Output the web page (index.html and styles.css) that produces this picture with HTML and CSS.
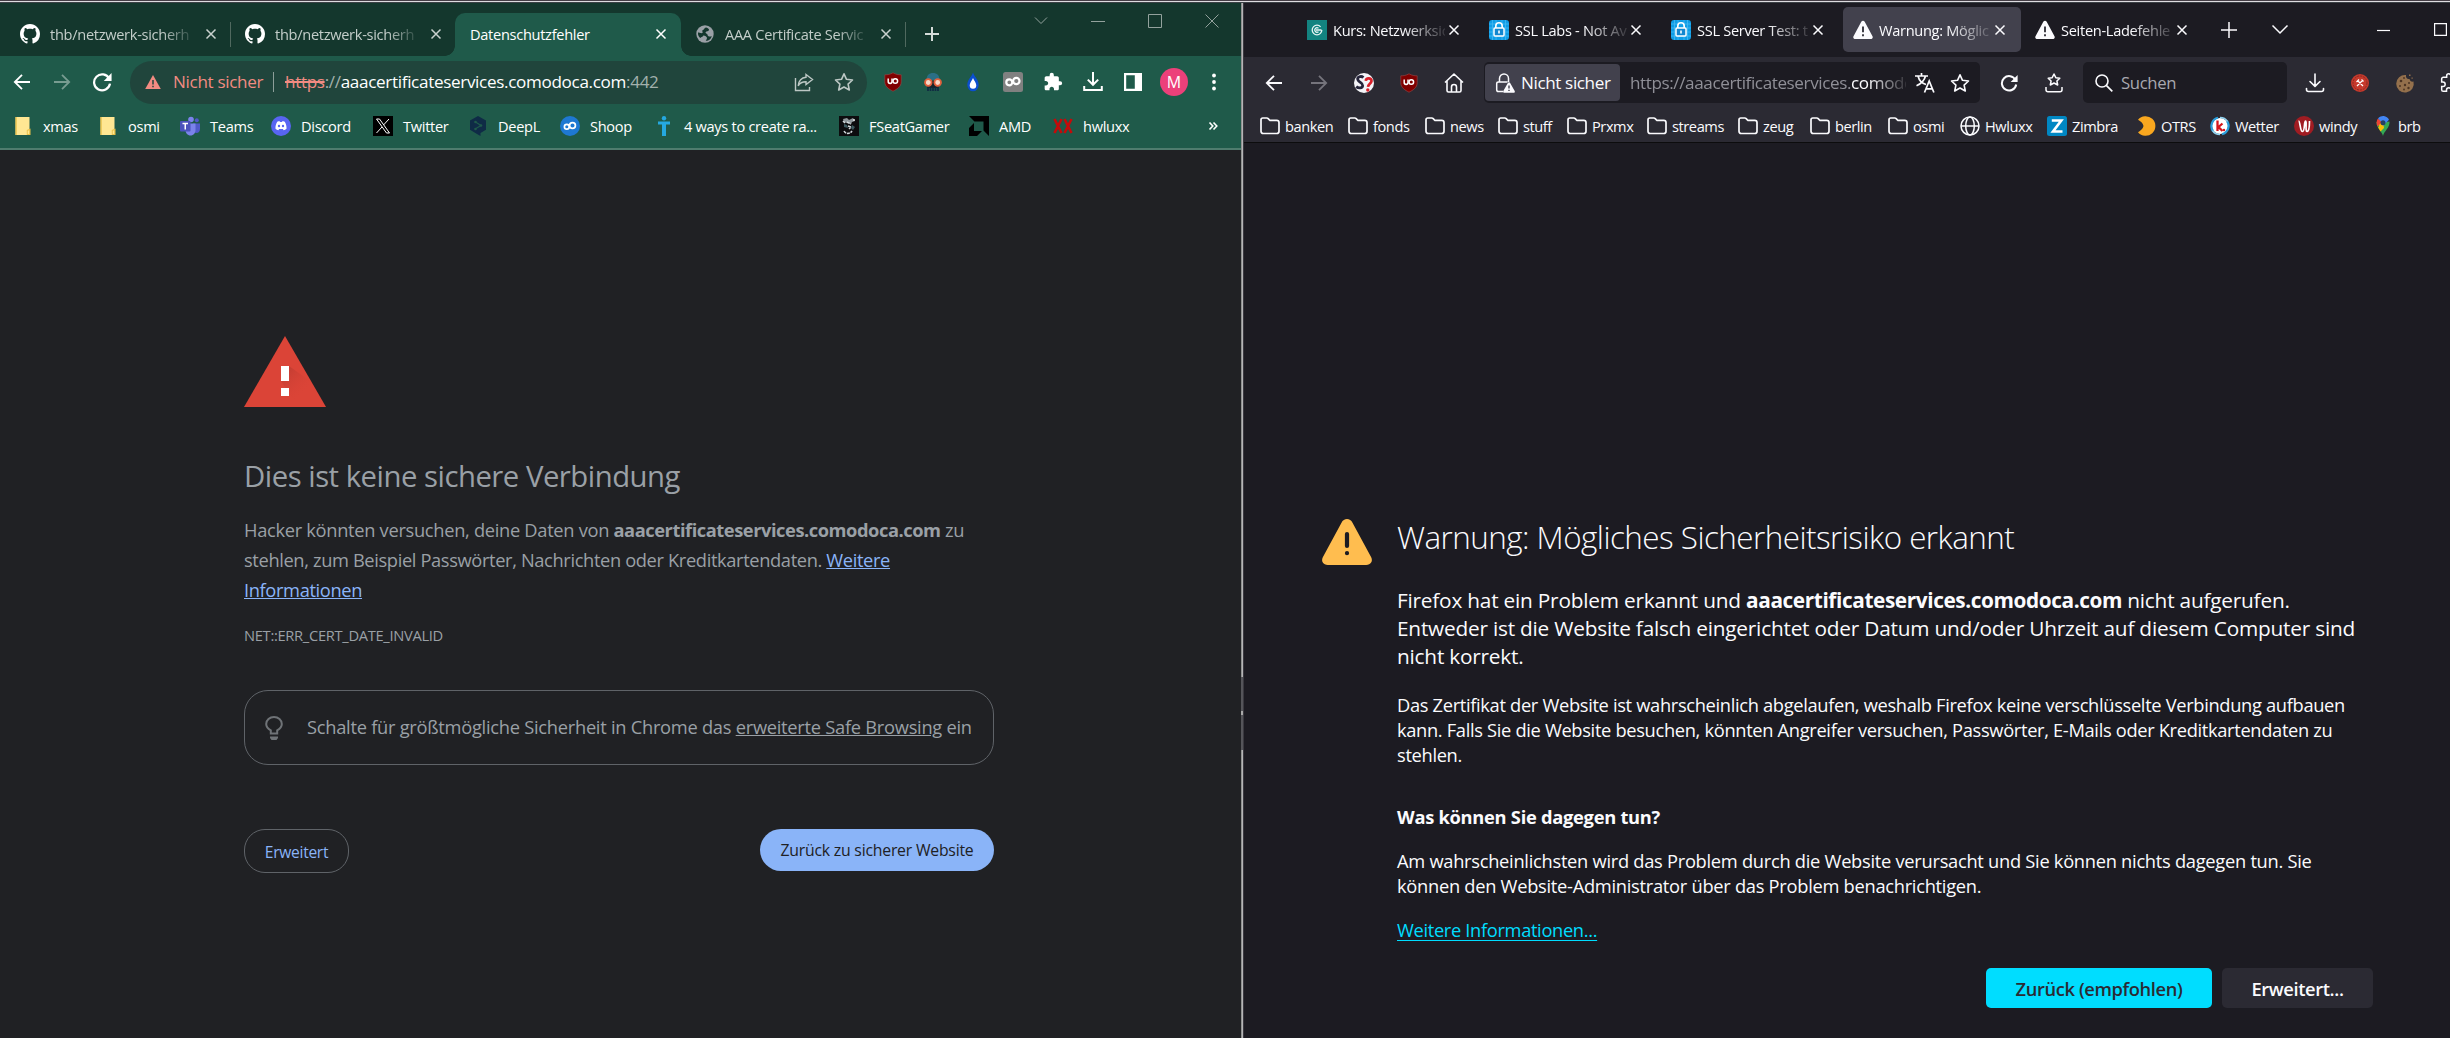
FILE: index.html
```
<!DOCTYPE html>
<html lang="de">
<head>
<meta charset="utf-8">
<title>Datenschutzfehler</title>
<link rel="stylesheet" href="styles.css">
</head>
<body>
<svg class="defs" aria-hidden="true">
  <symbol id="github" viewBox="0 0 16 16"><path fill="#fff" d="M8 0C3.58 0 0 3.58 0 8c0 3.54 2.29 6.53 5.47 7.59.4.07.55-.17.55-.38 0-.19-.01-.82-.01-1.49-2.01.37-2.53-.49-2.69-.94-.09-.23-.48-.94-.82-1.13-.28-.15-.68-.52-.01-.53.63-.01 1.08.58 1.23.82.72 1.21 1.87.87 2.33.66.07-.52.28-.87.51-1.07-1.78-.2-3.64-.89-3.64-3.95 0-.87.31-1.59.82-2.15-.08-.2-.36-1.02.08-2.12 0 0 .67-.21 2.2.82.64-.18 1.32-.27 2-.27s1.36.09 2 .27c1.53-1.04 2.2-.82 2.2-.82.44 1.1.16 1.92.08 2.12.51.56.82 1.27.82 2.15 0 3.07-1.87 3.75-3.65 3.95.29.25.54.73.54 1.48 0 1.07-.01 1.93-.01 2.2 0 .21.15.46.55.38A8.01 8.01 0 0 0 16 8c0-4.42-3.58-8-8-8z"/></symbol>
  <symbol id="cross" viewBox="0 0 12 12"><path fill="none" stroke="currentColor" stroke-width="1.5" d="M1.5 1.5l9 9M10.5 1.5l-9 9"/></symbol>
  <symbol id="arrow-l" viewBox="0 0 18 18"><path fill="none" stroke="currentColor" stroke-width="1.8" d="M17 9H2M9 1.8L1.8 9 9 16.2"/></symbol>
  <symbol id="arrow-r" viewBox="0 0 18 18"><path fill="none" stroke="currentColor" stroke-width="1.8" d="M1 9h15M9 1.8L16.2 9 9 16.2"/></symbol>
  <symbol id="reload" viewBox="0 0 18 18"><path fill="none" stroke="currentColor" stroke-width="2" d="M15.5 6A7.2 7.2 0 1 0 16.2 10.5"/><path fill="currentColor" d="M17.6 1v7h-7z"/></symbol>
  <symbol id="star" viewBox="0 0 20 20"><path fill="none" stroke="currentColor" stroke-width="1.6" stroke-linejoin="round" d="M10 1.8l2.5 5.5 6 .7-4.4 4.1 1.2 5.9-5.3-3-5.3 3 1.2-5.9L1.500 8l6-.7z"/></symbol>
  <symbol id="download" viewBox="0 0 20 20"><path fill="none" stroke="currentColor" stroke-width="2" d="M10 0v12M4.800 7.600L10 12.800l5.200-5.200M1.200 14v4h17.600v-4"/></symbol>
  <symbol id="ublock" viewBox="0 0 20 20"><path fill="#800000" stroke="#9a4a4a" stroke-width=".6" d="M10 .8c3 1.700 5.500 2 8.200 2v7c0 5-4.500 7.500-8.200 9.400C6.300 17.300 1.800 14.800 1.800 9.800v-7c2.700 0 5.200-.3 8.200-2z"/><path fill="none" stroke="#fff" stroke-width="1.500" d="M5.200 6.500v3a1.800 1.800 0 0 0 3.800 0v-3m0 2.700"/><circle cx="12.300" cy="9" r="2.300" fill="none" stroke="#fff" stroke-width="1.500"/></symbol>
  <symbol id="puzzle" viewBox="0 0 24 24"><path d="M20.500 11H19V7c0-1.100-.9-2-2-2h-4V3.500a2.500 2.500 0 0 0-5 0V5H4c-1.100 0-2 .9-2 2v3.800h1.500c1.500 0 2.700 1.200 2.700 2.700S5 16.200 3.500 16.200H2V20c0 1.100.9 2 2 2h3.800v-1.500c0-1.500 1.200-2.700 2.700-2.700s2.700 1.200 2.700 2.700V22H17c1.100 0 2-.9 2-2v-4h1.500a2.500 2.500 0 0 0 0-5z"/></symbol>
  <symbol id="folder" viewBox="0 0 20 20"><path fill="none" stroke="currentColor" stroke-width="1.700" stroke-linejoin="round" d="M1 3.800C1 2.600 1.700 2 2.800 2h4c.6 0 1 .2 1.400.600l1.500 1.700h7c1.500 0 2.300.8 2.300 2.200v8.700c0 1.500-.8 2.300-2.300 2.300H3.300C1.800 17.500 1 16.700 1 15.200z"/></symbol>
  <symbol id="win-folder" viewBox="0 0 20 20"><path fill="#ffe793" d="M2.500 1h14v18h-14z"/><path fill="#e9c048" d="M2.500 1h1.200v18H2.500zM13.800 14l3.700-1.500V19h-3.700z"/><path fill="#ffe793" d="M14.700 14.500h1.500V18h-1.500z"/></symbol>
  <symbol id="warn" viewBox="0 0 20 20"><path fill="#fbfbfe" d="M8.300 1.800c.7-1.500 2.700-1.500 3.400 0l7.800 14.400c.7 1.500-.2 2.900-1.800 2.900H2.300C.7 19.100-.2 17.700.500 16.200z"/><path stroke="#2b2a33" stroke-width="1.800" d="M10 6.500v5.800M10 14.200v2"/></symbol>
  <symbol id="ssl" viewBox="0 0 20 20"><rect width="20" height="20" rx="3" fill="#0e9de6"/><path stroke="#4bbcf2" stroke-width=".7" d="M3.500 0v20M7 0v20M13 0v20M16.500 0v20M0 4h20M0 8h20M0 12h20M0 16h20"/><rect x="5" y="8" width="10" height="8" rx="1" fill="#1287cf" stroke="#fff" stroke-width="1.500"/><path fill="none" stroke="#fff" stroke-width="1.600" d="M6.800 8V6a3.200 3.200 0 0 1 6.400 0v2M10 10.500v3"/></symbol>
</svg>

<div class="desktop-edge"></div>
<div class="desktop">
  <section class="chrome">
    <div class="c-strip">
      <div class="c-tab sep"><svg class="i20"><use href="#github"/></svg><span class="c-title fade">thb/netzwerk-sicherh</span><svg class="i12"><use href="#cross"/></svg></div>
      <div class="c-tab"><svg class="i20"><use href="#github"/></svg><span class="c-title fade">thb/netzwerk-sicherh</span><svg class="i12"><use href="#cross"/></svg></div>
      <div class="c-tab active"><span class="c-title">Datenschutzfehler</span><svg class="i12"><use href="#cross"/></svg></div>
      <div class="c-tab sep"><svg class="i20" viewBox="0 0 20 20"><circle cx="10" cy="10" r="8.700" fill="#9aa0a6"/><path fill="#14372d" d="M11 3.500c-2 .5-1.800 2.500-3.500 2.800-.8 1 .6 1.700 0 2.700-1.500.5-3.500-.5-4.500-.5-.3 3 1 4.800 2.500 5.500.5-1.500 2.200-.8 2.700-2.300 1.200-.4 2.500.5 3.500 1.500.9 1-.4 2.400-1 3.600 3 .2 5.500-2 6-4.800-1.700 1.200-4.200.5-4.200-1.500-.5-1.200-2-.8-2-2.300.9-1.200 3.300-.7 3.600-2.500-.4-1.200-1.800-2-3.100-2.200z"/></svg><span class="c-title fade">AAA Certificate Servic</span><svg class="i12"><use href="#cross"/></svg></div>
      <div class="c-plus"><svg class="i14" viewBox="0 0 14 14"><path stroke="#d5dcd9" stroke-width="2" d="M7 0v14M0 7h14"/></svg></div>
      <div class="c-controls">
        <svg viewBox="0 0 14 14"><path d="M1 3.500l6 6 6-6"/></svg>
        <svg viewBox="0 0 14 14"><path d="M0 7.500h14"/></svg>
        <svg viewBox="0 0 14 14"><path d="M.5.500h13v13H.5z"/></svg>
        <svg viewBox="0 0 14 14"><path d="M.5.500l13 13M13.500.500l-13 13"/></svg>
      </div>
    </div>
    <div class="c-toolbar">
      <div class="c-row">
        <span class="cell"><svg class="i18"><use href="#arrow-l"/></svg></span>
        <span class="cell dim"><svg class="i18"><use href="#arrow-r"/></svg></span>
        <span class="cell"><svg class="i20"><use href="#reload"/></svg></span>
        <div class="omnibox">
          <svg class="i16" viewBox="0 0 16 16"><path fill="#f28b82" d="M8 1l7.800 14H.2z"/><path stroke="#20453c" stroke-width="1.500" d="M8 6v4.500M8 11.700v1.500"/></svg>
          <span class="insecure">Nicht sicher</span>
          <span class="bar"></span>
          <span class="url"><s>https</s>://<b>aaacertificateservices.comodoca.com</b>:442</span>
          <span class="cell grey"><svg class="i20" viewBox="0 0 20 20"><path fill="none" stroke="currentColor" stroke-width="1.400" d="M1.500 6v12.500h14V15M12 2.500l6.500 5-6.500 5V9.800c-4 0-6.200 1.200-7.800 4C4.700 9.500 7 5.800 12 5.300z"/></svg></span>
          <span class="cell grey"><svg class="i20"><use href="#star"/></svg></span>
        </div>
        <span class="cell first"><svg class="i20"><use href="#ublock"/></svg></span>
        <span class="cell"><svg class="i20" viewBox="0 0 20 20"><path fill="#2a6f86" d="M3.500 8C3.500 3.500 6 1 10 1s6.500 2.500 6.500 7z"/><path fill="#15242b" d="M4 9h12v5l-1 2H5l-1-2z"/><circle cx="5.300" cy="10.500" r="3.300" fill="#f7d9c8" stroke="#e2603c" stroke-width="1.800"/><circle cx="14.700" cy="10.500" r="3.300" fill="#f7d9c8" stroke="#e2603c" stroke-width="1.800"/><path stroke="#102a43" stroke-width="1.700" d="M5 15v4M7.500 15.500V19M10 15.500V19M12.500 15.500V19M15 15v4"/></svg></span>
        <span class="cell"><svg class="i20" viewBox="0 0 20 20"><path fill="#0b4fd0" d="M10 .5c1.200 4 5.700 7.300 5.700 12.300a5.700 6.500 0 0 1-11.400 0C4.300 7.800 8.800 4.500 10 .5z"/><path fill="#fff" d="M10 6c.8 2.400 3.300 4.700 3.300 7.300a3.300 3.500 0 0 1-6.600 0C6.700 10.700 9.200 8.400 10 6z"/></svg></span>
        <span class="cell"><svg class="i20" viewBox="0 0 20 20"><rect width="20" height="20" rx="2.500" fill="#808080"/><circle cx="6.300" cy="10.300" r="3" fill="none" stroke="#fff" stroke-width="2.200"/><circle cx="13.300" cy="9" r="3.200" fill="none" stroke="#fff" stroke-width="2.200"/></svg></span>
        <span class="cell"><svg class="i20 solid"><use href="#puzzle"/></svg></span>
        <span class="cell"><svg class="i20"><use href="#download"/></svg></span>
        <span class="cell"><svg class="i18" viewBox="0 0 18 18"><path fill="#fff" fill-rule="evenodd" d="M0 0h18v18H0zM2.200 2.200v13.600h8.600V2.200z"/></svg></span>
        <span class="cell wide"><span class="avatar">M</span></span>
        <span class="cell menu"><svg class="i18" viewBox="0 0 18 18"><circle cx="9" cy="2.500" r="1.900" fill="#fff"/><circle cx="9" cy="9" r="1.900" fill="#fff"/><circle cx="9" cy="15.500" r="1.900" fill="#fff"/></svg></span>
      </div>
      <div class="c-marks">
        <span><svg class="i20"><use href="#win-folder"/></svg>xmas</span>
        <span><svg class="i20"><use href="#win-folder"/></svg>osmi</span>
        <span><svg class="i20" viewBox="0 0 20 20"><circle cx="11" cy="3.500" r="2.800" fill="#7b83eb"/><circle cx="16.800" cy="4.300" r="2" fill="#5059c9"/><path fill="#5059c9" d="M13 7.500h7v5.500c0 2.500-1.700 4-3.500 4S13 15 13 13z"/><path fill="#7b83eb" d="M5.500 7.500h10v6.500c0 3-2 5.500-5 5.500s-5-2.500-5-5.500z"/><rect y="5" width="10.500" height="10.500" rx="1" fill="#4b53bc"/><path stroke="#fff" stroke-width="1.500" d="M2.500 7.500H8M5.250 7.500v6"/></svg>Teams</span>
        <span><svg class="i20" viewBox="0 0 20 20"><circle cx="10" cy="10" r="10" fill="#5865f2"/><path fill="#fff" d="M6.200 5.800C7.200 5.300 8 5.200 8.500 5.100l.4.800h2.200l.4-.8c.5.1 1.300.2 2.300.7 1.300 2.200 1.900 4.500 1.700 7-.9.800-1.800 1.200-2.900 1.500l-.7-1.200H8.100l-.7 1.200c-1.100-.3-2-.7-2.900-1.500-.2-2.500.4-4.800 1.700-7z"/><circle cx="8" cy="10" r="1.200" fill="#5865f2"/><circle cx="12" cy="10" r="1.200" fill="#5865f2"/></svg>Discord</span>
        <span><svg class="i20" viewBox="0 0 20 20"><path d="M0 0h20v20H0z"/><path fill="none" stroke="#fff" stroke-width="1" d="M3.500 3h3l10 14h-3zM16 3l-5.500 6M9 11l-5.500 6"/></svg>Twitter</span>
        <span><svg class="i20 deepl" viewBox="0 0 20 20"><path fill="#0f2b46" d="M10 0l8 4.500v9.300L12.500 17v3L9 18 2 13.800V4.500z"/><path fill="none" stroke="#1f5a4a" stroke-width="1.200" d="M7.500 6l5.500 3.500-5.500 3.200"/><circle cx="7.500" cy="6" r="1.300" fill="#1f5a4a"/><circle cx="13" cy="9.500" r="1.300" fill="#1f5a4a"/><circle cx="7.500" cy="13" r="1.300" fill="#1f5a4a"/></svg>DeepL</span>
        <span><svg class="i20" viewBox="0 0 20 20"><circle cx="10" cy="10" r="10" fill="#1e78d2"/><circle cx="6.800" cy="10.700" r="2.400" fill="none" stroke="#fff" stroke-width="1.700"/><circle cx="12.500" cy="9.500" r="2.900" fill="none" stroke="#fff" stroke-width="1.700"/></svg>Shoop</span>
        <span><svg class="i20" viewBox="0 0 20 20"><path fill="#25a8e0" d="M4 5.500h12v3h-4V20H8V8.500H4z"/><circle cx="10" cy="2.300" r="2.200" fill="#25a8e0"/></svg>4 ways to create ra...</span>
        <span><svg class="i20" viewBox="0 0 20 20"><path fill="#0c0c0e" d="M0 0h20v20H0z"/><path fill="#8e979b" d="M4 3l4-1 2 2 4-2 2 3-3 1-1 2-4-1-3-1z"/><path fill="#3d5a60" d="M5 8l3 1 1 3-4-1zM13 9l3 2-2 3-2-2z"/><path fill="none" stroke="#d3d9dc" stroke-width="1.500" stroke-dasharray="3 .8" d="M5 15c2 3.500 6 3 8 0M8 6l4 2M9 10l3 1-2 2M4 5l2 2"/><circle cx="15" cy="4" r="1" fill="#e6eaec"/></svg>FSeatGamer</span>
        <span><svg class="i20" viewBox="0 0 20 20"><path d="M0 0h20v20l-5.500-5.500v-9h-9zM5 7v8h8l-5 5H0v-8z"/></svg>AMD</span>
        <span><svg class="i20" viewBox="0 0 20 20"><path fill="none" stroke="#c40a0a" stroke-width="2.600" d="M1.500 3l7 14M8.500 3l-7 14M11.500 3l7 14M18.500 3l-7 14"/></svg>hwluxx</span>
        <span class="more"><svg class="i10" viewBox="0 0 10 10"><path fill="none" stroke="#fff" stroke-width="1.600" d="M1.500 1.500L4.800 5 1.500 8.500M5.500 1.500L8.800 5 5.500 8.500"/></svg></span>
      </div>
    </div>
    <main class="c-page">
      <svg class="danger" viewBox="0 0 82 71"><defs><linearGradient id="sh" x1="0" y1="0" x2="1" y2="1"><stop offset="0" stop-color="#b93a30"/><stop offset=".6" stop-color="#db4437" stop-opacity="0"/></linearGradient></defs><path fill="#db4437" d="M41 0l41 71H0z"/><path fill="url(#sh)" d="M45 30l21 15 16 26H54L37 45h8z"/><path fill="#fff" d="M37 30h8v15h-8zM37 52h8v8h-8z"/></svg>
      <h1>Dies ist keine sichere Verbindung</h1>
      <p class="c-text"><span class="l1">Hacker könnten versuchen, deine Daten von <b>aaacertificateservices.comodoca.com</b> zu</span><br>stehlen, zum Beispiel Passwörter, Nachrichten oder Kreditkartendaten. <a>Weitere<br>Informationen</a></p>
      <p class="c-code">NET::ERR_CERT_DATE_INVALID</p>
      <div class="c-tip">
        <svg viewBox="0 0 18 24"><path fill="none" stroke="#6f7377" stroke-width="2" d="M5.800 17.500v-3.200C3 12.800 1.200 11 1.200 8a7.800 7 0 0 1 15.600 0c0 3-1.800 4.800-4.600 6.300v3.200z"/><path fill="#6f7377" d="M5 20.500h8v1.500l-1.500 2h-5L5 22z"/></svg>
        <span>Schalte für größtmögliche Sicherheit in Chrome das <u>erweiterte Safe Browsing</u> ein</span>
      </div>
      <div class="c-actions"><span class="c-more">Erweitert</span><span class="c-back">Zurück zu sicherer Website</span></div>
    </main>
  </section>

  <div class="divider"><span class="grip"></span></div>

  <section class="firefox">
    <div class="f-strip">
      <div class="f-tab"><svg class="i20" viewBox="0 0 20 20"><path fill="#138380" d="M0 0h20v20H0z"/><circle cx="10" cy="10" r="4.800" fill="none" stroke="#e8f5f4" stroke-width="1.300" stroke-dasharray="26 4"/><path fill="none" stroke="#e8f5f4" stroke-width="1.300" d="M14.500 10H9M11.500 8.200A2.300 2.300 0 1 0 11.500 11.800"/></svg><span class="f-title">Kurs: Netzwerksic</span><svg class="i12"><use href="#cross"/></svg></div>
      <div class="f-tab"><svg class="i20"><use href="#ssl"/></svg><span class="f-title">SSL Labs - Not Av</span><svg class="i12"><use href="#cross"/></svg></div>
      <div class="f-tab"><svg class="i20"><use href="#ssl"/></svg><span class="f-title">SSL Server Test: tr</span><svg class="i12"><use href="#cross"/></svg></div>
      <div class="f-tab active"><svg class="i20"><use href="#warn"/></svg><span class="f-title">Warnung: Möglic</span><svg class="i12"><use href="#cross"/></svg></div>
      <div class="f-tab"><svg class="i20"><use href="#warn"/></svg><span class="f-title">Seiten-Ladefehle</span><svg class="i12"><use href="#cross"/></svg></div>
      <span class="f-plus"><svg class="i16" viewBox="0 0 16 16"><path stroke="#fbfbfe" stroke-width="1.500" d="M8 0v16M0 8h16"/></svg></span>
      <span class="f-list"><svg class="i16" viewBox="0 0 16 16"><path fill="none" stroke="#fbfbfe" stroke-width="1.500" d="M.5 3.500L8 11l7.500-7.500"/></svg></span>
      <span class="f-win"><svg viewBox="0 0 13 13"><path d="M0 7.500h13"/></svg></span>
      <span class="f-win"><svg viewBox="0 0 13 13"><path d="M.6.600h11.800v11.800H.6z"/></svg></span>
    </div>
    <div class="f-nav">
      <span class="fcell"><svg class="i18"><use href="#arrow-l"/></svg></span>
      <span class="fcell dim"><svg class="i18"><use href="#arrow-r"/></svg></span>
      <span class="fcell"><svg class="i20" viewBox="0 0 20 20"><circle cx="10" cy="10" r="10" fill="#f4f4f8"/><path fill="none" stroke="#25243a" stroke-width="2.800" d="M9.500 4.500C7 2.500 3 3.800 3.800 6.600S9 9.700 8.700 12.600s-4.200 3-6.500 1"/><path fill="none" stroke="#d8202a" stroke-width="2.700" d="M11.800 7.800c.3-3.200 6-3.200 5.700.3-.3 2.500-3.300 2.700-3.500 5.700"/><circle cx="13.800" cy="17" r="1.700" fill="#d8202a"/></svg></span>
      <span class="fcell"><svg class="i20"><use href="#ublock"/></svg></span>
      <span class="fcell"><svg class="i20" viewBox="0 0 20 20"><path fill="none" stroke="#fbfbfe" stroke-width="1.600" stroke-linejoin="round" d="M1 9.500L10 1l9 8.500M3 8v9.500C3 18.500 3.500 19 4.500 19h11c1 0 1.500-.5 1.500-1.500V8M7.500 19v-5a2.500 2.500 0 0 1 5 0v5"/></svg></span>
      <div class="f-url">
        <span class="identity"><svg class="i20" viewBox="0 0 20 20"><path fill="none" stroke="#fbfbfe" stroke-width="1.500" d="M4.500 9V5.500a4.500 4.500 0 0 1 9 0V9M8 18.500H3.500c-1 0-1.800-.8-1.800-1.800v-6C1.700 9.700 2.500 9 3.500 9h9"/><path fill="#fbfbfe" d="M13 9.800c.4-.8 1.600-.8 2 0l4.700 8.200c.5.900-.1 1.800-1.100 1.800H9.400c-1 0-1.600-.9-1.100-1.800z"/><path stroke="#42414d" stroke-width="1.400" d="M14 12.500v3M14 16.700v1.400"/></svg>Nicht sicher</span>
        <span class="f-addr">https://aaacertificateservices.<b>comodo</b></span>
        <span class="ucell"><svg class="i20" viewBox="0 0 20 20"><path fill="none" stroke="#fbfbfe" stroke-width="1.700" d="M0 3h13M6.500 0v3M3 3c1 4 4.500 7.500 8 8.500M10.500 3C9.500 7 5.500 11 1.500 12.800M9.500 19.500l4.700-11.500 4.700 11.500M11 15.800h6.500"/></svg></span>
        <span class="ucell"><svg class="i20"><use href="#star"/></svg></span>
      </div>
      <span class="fcell re"><svg class="i18"><use href="#reload"/></svg></span>
      <span class="fcell"><svg class="i20" viewBox="0 0 20 20"><path fill="none" stroke="#fbfbfe" stroke-width="1.500" stroke-linejoin="round" d="M10 1l1.800 3.700 4 .5-2.900 2.800.8 4-3.700-2-3.700 2 .8-4-2.900-2.800 4-.5zM2 14v2.800c0 1.200.8 2 2 2h12c1.200 0 2-.8 2-2V14"/></svg></span>
      <div class="f-search"><svg class="i18" viewBox="0 0 18 18"><circle cx="7" cy="7" r="6" fill="none" stroke="#fbfbfe" stroke-width="1.600"/><path stroke="#fbfbfe" stroke-width="1.700" d="M11.300 11.300l6 6"/></svg>Suchen</div>
      <span class="fcell dl"><svg class="i20" viewBox="0 0 20 20"><path fill="none" stroke="#fbfbfe" stroke-width="1.600" stroke-linecap="round" stroke-linejoin="round" d="M10 1v12M5 8.500l5 4.800 5-4.800M1.500 15.500v1c0 1.200.8 2 2 2h13c1.200 0 2-.8 2-2v-1"/></svg></span>
      <span class="fcell"><svg class="i20" viewBox="0 0 20 20"><circle cx="10" cy="10" r="9" fill="#c6392c"/><circle cx="10" cy="10" r="7" fill="none" stroke="#8b2a22" stroke-dasharray="2 1"/><path stroke="#fff" stroke-width="1.300" d="M7.500 7.500l5.500 5.500M12.500 7.500L7 13M6.500 9l2.500-2.500M11.500 6.500l2 2"/></svg></span>
      <span class="fcell"><svg class="i20" viewBox="0 0 20 20"><path fill="#94704c" d="M11 2c-.5 3 1.500 4.500 3.500 4 .5 2 2 3 4 2.500A8.800 8.800 0 1 1 11 2z"/><g fill="#4c3423"><circle cx="6" cy="8" r="1.300"/><circle cx="10" cy="12" r="1.200"/><circle cx="5" cy="13" r="1"/><circle cx="13.500" cy="15" r="1.200"/><circle cx="14" cy="10" r="1"/><circle cx="9" cy="16.500" r=".9"/><circle cx="9" cy="5" r=".9"/></g><path fill="#94704c" d="M14 1.500h1.500V3H14zM16.500 4.500h1.200v1.200h-1.200z"/></svg></span>
      <span class="fcell"><svg class="i20 outline"><use href="#puzzle"/></svg></span>
    </div>
    <div class="f-marks">
      <span><svg class="i20"><use href="#folder"/></svg>banken</span>
      <span><svg class="i20"><use href="#folder"/></svg>fonds</span>
      <span><svg class="i20"><use href="#folder"/></svg>news</span>
      <span><svg class="i20"><use href="#folder"/></svg>stuff</span>
      <span><svg class="i20"><use href="#folder"/></svg>Prxmx</span>
      <span><svg class="i20"><use href="#folder"/></svg>streams</span>
      <span><svg class="i20"><use href="#folder"/></svg>zeug</span>
      <span><svg class="i20"><use href="#folder"/></svg>berlin</span>
      <span><svg class="i20"><use href="#folder"/></svg>osmi</span>
      <span><svg class="i20" viewBox="0 0 20 20"><g fill="none" stroke="#fbfbfe" stroke-width="1.500"><circle cx="10" cy="10" r="9"/><ellipse cx="10" cy="10" rx="4.300" ry="9"/><path d="M1 10h18"/></g></svg>Hwluxx</span>
      <span><svg class="i20" viewBox="0 0 20 20"><rect width="20" height="20" rx="2.500" fill="#0087c3"/><path fill="none" stroke="#fff" stroke-width="2.600" d="M4.800 4.500h9.500L6 15.500h9.500"/></svg>Zimbra</span>
      <span><svg class="i20" viewBox="0 0 20 20"><path fill="#f9a71f" d="M2 3.800A9.800 9.800 0 1 1 2 16.200C4.500 14.500 7 13 7.500 10 7 7 4.500 5.500 2 3.800z"/></svg>OTRS</span>
      <span><svg class="i20" viewBox="0 0 20 20"><circle cx="10" cy="10" r="8" fill="#fff"/><path fill="none" stroke="#2b9fdc" stroke-width="2.200" d="M3 15A8.500 8.500 0 0 1 8 1.800M17 5a8.500 8.500 0 0 1-5 13.200"/><path fill="none" stroke="#8fd0ee" stroke-width="1.500" d="M10 1.500c3 0 6 1.500 7.500 4M10 18.500c-3 0-6-1.500-7.500-4"/><path fill="none" stroke="#d4161c" stroke-width="2.300" d="M7.500 4.500v10.500M12.500 7.500L8.500 11l4 4"/><circle cx="14" cy="14" r="1.200" fill="#d4161c"/></svg>Wetter</span>
      <span><svg class="i20" viewBox="0 0 20 20"><circle cx="10" cy="10" r="10" fill="#a01c22"/><path fill="none" stroke="#fff" stroke-width="1.700" d="M4.500 5c1.800 0 1.500 10.500 4 10.500S10 5 11.500 5s-.5 10.500 1.500 10.500S15.500 10 15.500 5"/></svg>windy</span>
      <span><svg class="i20" viewBox="0 0 20 20"><path fill="#34a853" d="M10 20C9 15.500 3.500 12 3.500 6.500L10 6.500l6.500-1C17 12 11 15 10 20z"/><path fill="#fbbc04" d="M3.500 6.500L8 12l6-7-6-1z"/><path fill="#fbbc04" d="M5.200 11.500L10 6l1 6-3.500 3.500z"/><path fill="#ea4335" d="M5 2.500L9 6l-4.500 4.500C3 7.500 3.500 4 5 2.500z"/><path fill="#4285f4" d="M5 2.500a6.600 6.600 0 0 1 11 1.200L10 10 8 5.500z"/><circle cx="10" cy="6.700" r="2.500" fill="#25405f"/></svg>brb</span>
    </div>
    <main class="f-page">
      <svg class="f-warn" viewBox="0 0 50 46"><path fill="#ffbd4f" d="M19.500 3.800c2.300-5 8.700-5 11 0l18.700 34.500c2 4-.5 7.700-5 7.700H5.800c-4.500 0-7-3.700-5-7.700z"/><path stroke="#1c1b22" stroke-width="4.200" stroke-linecap="round" d="M25 15v12M25 34v.2"/></svg>
      <div class="f-col">
        <h1>Warnung: Mögliches Sicherheitsrisiko erkannt</h1>
        <p class="f-lead">Firefox hat ein Problem erkannt und <b>aaacertificateservices.comodoca.com</b> nicht aufgerufen.<br>Entweder ist die Website falsch eingerichtet oder Datum und/oder Uhrzeit auf diesem Computer sind<br>nicht korrekt.</p>
        <p class="f-body">Das Zertifikat der Website ist wahrscheinlich abgelaufen, weshalb Firefox keine verschlüsselte Verbindung aufbauen<br>kann. Falls Sie die Website besuchen, könnten Angreifer versuchen, Passwörter, E-Mails oder Kreditkartendaten zu<br>stehlen.</p>
        <h2>Was können Sie dagegen tun?</h2>
        <p class="f-body second">Am wahrscheinlichsten wird das Problem durch die Website verursacht und Sie können nichts dagegen tun. Sie<br>können den Website-Administrator über das Problem benachrichtigen.</p>
        <p class="f-body second"><a>Weitere Informationen...</a></p>
        <div class="f-actions"><span class="primary">Zurück (empfohlen)</span><span>Erweitert...</span></div>
      </div>
    </main>
  </section>
</div>
</body>
</html>
```
FILE: styles.css
```
* { box-sizing: border-box; }
body {
  margin: 0;
  width: 2450px;
  height: 1038px;
  overflow: hidden;
  background: #1c1b22;
  font: 14.6px/20px "Open Sans", "Noto Sans", sans-serif;
  letter-spacing: -.3px;
}
h1, h2, p { margin: 0; }
svg { display: block; flex: none; overflow: visible; }
.defs { position: absolute; width: 0; height: 0; }
.i10 { width: 10px; height: 10px; }
.i12 { width: 12px; height: 12px; }
.i14 { width: 14px; height: 14px; }
.i16 { width: 16px; height: 16px; }
.i18 { width: 18px; height: 18px; }
.i20 { width: 20px; height: 20px; }

.desktop-edge { height: 3px; background: linear-gradient(#453e46 0 1px, #dedce0 1px 2px, #3b4045 2px 3px); }
.desktop { display: flex; height: 1035px; }

/* Chrome window */
.chrome { width: 1241px; flex: none; display: flex; flex-direction: column; background: #202124; }
.c-strip { display: flex; height: 53px; background: #14372d; color: #c3cdc9; }
.c-tab { position: relative; display: flex; align-items: center; width: 225px; padding: 9px 8px 0 20px; }
.c-tab .i12 { margin-left: 15px; color: #c9d1ce; }
.c-title { width: 140px; flex: none; margin-left: 10px; white-space: nowrap; }
.c-title.fade { -webkit-mask-image: linear-gradient(90deg, #000 112px, transparent 146px); mask-image: linear-gradient(90deg, #000 112px, transparent 146px); }
.c-tab.sep::after { content: ""; position: absolute; right: -6px; top: 19px; width: 1px; height: 25px; background: #50695f; }
.c-tab.active { width: 226px; margin: 10px -6px 0 5px; padding: 0 14px 1px 15px; background: #1f5a4a; border-radius: 10px 10px 0 0; color: #fff; }
.c-tab.active .c-title { width: 170px; margin-left: 0; }
.c-tab.active .i12 { color: #fff; }
.c-tab.active::before, .c-tab.active::after { content: ""; position: absolute; bottom: 0; width: 10px; height: 10px; }
.c-tab.active::before { left: -10px; background: radial-gradient(circle at 0 0, transparent 9.5px, #1f5a4a 10px); }
.c-tab.active::after { right: -10px; background: radial-gradient(circle at 100% 0, transparent 9.5px, #1f5a4a 10px); }
.c-plus { display: flex; align-items: center; padding: 9px 0 0 25px; }
.c-controls { display: flex; margin: 0 1px 0 auto; padding-top: 11px; }
.c-controls svg { width: 14px; height: 14px; margin: 0 21.5px; fill: none; stroke: #93a29d; stroke-width: 1; }
.c-toolbar { height: 94px; background: #1f5a4a; border-bottom: 2px solid #4f7c6e; color: #fff; }
.c-row { display: flex; align-items: center; height: 52px; padding-left: 2px; }
.cell { display: flex; justify-content: center; width: 40px; flex: none; }
.cell.dim { color: #789c91; }
.cell.grey { color: #bcc7c4; }
.cell.first { margin-left: 6px; }
.cell.wide { width: 42px; }
.cell.menu { width: 37px; }
.solid { fill: #fff; }
.omnibox { display: flex; align-items: center; width: 737px; height: 43px; margin-left: 8px; padding: 0 3px 0 15px; border-radius: 21.5px; background: #20453c; font-size: 17.1px; letter-spacing: -.33px; }
.insecure { margin-left: 12px; width: 91px; color: #f28b82; white-space: nowrap; }
.bar { width: 1px; height: 20px; margin: 0 11px 0 9px; background: #8c9e99; }
.url { flex: 1; color: #a3b1ad; white-space: nowrap; }
.url b { font-weight: 400; color: #fff; }
.url s { color: #f28b82; text-decoration-thickness: 2px; }
.avatar { width: 28px; height: 28px; border-radius: 50%; background: #ec407a; font-size: 16px; line-height: 28px; text-align: center; letter-spacing: 0; }
.c-marks { display: grid; grid-template-columns: 85px 82px 91px 102px 95px 92px 94px 185px 130px 84px 150px 12px; height: 36px; padding-left: 13px; align-items: center; white-space: nowrap; }
.c-marks > span { display: flex; align-items: center; gap: 10px; }
.c-marks .more { margin-left: 5px; }

.c-page { padding: 186px 0 0 244px; color: #9aa0a6; }
.danger { width: 82px; height: 71px; }
.c-page h1 { margin-top: 51px; font-size: 29.3px; line-height: 36px; font-weight: 400; letter-spacing: -.49px; }
.c-text { margin-top: 21px; font-size: 18.3px; line-height: 30px; letter-spacing: -.37px; white-space: nowrap; }
.c-text .l1 { letter-spacing: -.31px; }
.c-text b { letter-spacing: -.45px; }
.c-text a { color: #8ab4f8; text-decoration: underline; }
.c-code { margin-top: 20px; font-size: 14.7px; letter-spacing: -.31px; }
.c-tip { display: flex; align-items: center; width: 750px; height: 75px; margin-top: 45px; padding-left: 20px; border: 1px solid #5f6368; border-radius: 24px; font-size: 18.3px; letter-spacing: -.27px; white-space: nowrap; }
.c-tip svg { width: 18px; height: 24px; margin-right: 24px; }
.c-tip span { padding-bottom: 1px; }
.c-actions { display: flex; justify-content: space-between; align-items: flex-start; width: 750px; margin-top: 64px; font-size: 15.6px; letter-spacing: -.3px; }
.c-more { width: 105px; height: 44px; border: 1px solid #5f6368; border-radius: 21px; color: #8ab4f8; line-height: 44px; text-align: center; }
.c-back { width: 234px; height: 42px; border-radius: 21px; background: #8ab4f8; color: #202124; font-size: 15.8px; line-height: 43px; text-align: center; letter-spacing: -.22px; }

/* Space between the two windows */
.divider { position: relative; width: 3px; flex: none; background: linear-gradient(90deg, #8f9190 1px, #b5b4b6 1px 2px, #3a3940 2px); }
.grip { position: absolute; left: 0; top: 674px; width: 2px; height: 73px; background: #55555a; }
.grip::after { content: ""; position: absolute; top: 34px; left: 0; width: 2px; height: 4px; background: #a9a9a9; }

/* Firefox window */
.firefox { width: 1206px; flex: none; overflow: hidden; background: #1c1b22; color: #fbfbfe; }
.f-strip { display: flex; width: 1230px; height: 54px; padding-left: 51px; }
.f-tab { display: flex; align-items: center; width: 178px; height: 45px; margin: 4px 2px 0; padding-left: 10px; border-radius: 5px; }
.f-tab.active { background: #42414d; }
.f-tab .i12 { margin-left: 3px; }
.f-title { width: 112px; flex: none; margin-left: 6px; white-space: nowrap; -webkit-mask-image: linear-gradient(90deg, #000 70px, transparent 118px); mask-image: linear-gradient(90deg, #000 70px, transparent 118px); }
.f-plus, .f-list, .f-win { display: flex; justify-content: center; align-items: center; height: 53px; }
.f-plus { width: 48px; }
.f-list { width: 48px; margin: 0 51px 0 3px; }
.f-win { width: 57px; }
.f-win svg { width: 13px; height: 13px; fill: none; stroke: #fbfbfe; stroke-width: 1.2; }
.f-nav { display: flex; align-items: center; width: 1240px; height: 51px; padding-left: 7.5px; background: #2b2a33; }
.fcell { display: flex; justify-content: center; width: 45px; flex: none; }
.fcell.dim { color: #75747c; }
.outline { fill: none; stroke: #fbfbfe; stroke-width: 1.8; }
.f-url { display: flex; align-items: center; width: 496px; height: 41px; margin-left: 7.5px; padding-left: 1px; border-radius: 5px; background: #1c1b22; font-size: 17.1px; }
.identity { display: flex; align-items: center; gap: 6px; width: 135px; height: 37px; flex: none; padding-left: 10px; border-radius: 4px; background: #42414d; letter-spacing: -.38px; white-space: nowrap; }
.f-addr { width: 276px; flex: none; margin: 1px 1px 0 10px; white-space: nowrap; color: #8f8f97; letter-spacing: -.4px; -webkit-mask-image: linear-gradient(90deg, #000 238px, transparent 280px); mask-image: linear-gradient(90deg, #000 238px, transparent 280px); }
.f-addr b { font-weight: 400; color: #fbfbfe; }
.ucell { display: flex; justify-content: center; width: 35px; }
.fcell.re { margin-left: 6.5px; }
.f-search { display: flex; align-items: center; gap: 8px; width: 204px; height: 41px; margin-left: 6.5px; padding-left: 12px; border-radius: 5px; background: #1c1b22; color: #a9a9b0; font-size: 16.7px; letter-spacing: -.35px; }
.fcell.dl { margin-left: 5.5px; }
.f-marks { display: grid; grid-template-columns: 88px 77px 73px 69px 80px 91px 72px 78px 72px 87px 89px 74px 84px 79px 60px; height: 35px; padding: 1px 0 0 16px; align-items: center; background: #2b2a33; border-bottom: 1px solid #0c0c0d; white-space: nowrap; letter-spacing: -.42px; }
.f-marks > span { display: flex; align-items: center; gap: 5px; }

.f-page { display: flex; padding: 372px 77px 0 78px; }
.f-warn { width: 50px; height: 46px; margin: 4px 26px 0 0; }
.f-col { width: 975px; margin-left: -1px; white-space: nowrap; }
.f-col h1 { font-size: 31.4px; line-height: 44px; font-weight: 300; letter-spacing: -.53px; }
.f-lead { margin-top: 27px; font-size: 20.8px; line-height: 28px; letter-spacing: -.21px; }
.f-lead b { letter-spacing: -.4px; }
.f-body { margin-top: 22px; font-size: 18.3px; line-height: 25px; letter-spacing: -.33px; }
.f-body.second { margin-top: 19px; letter-spacing: -.28px; }
.f-body a { color: #00ddff; text-decoration: underline; text-underline-offset: 3px; letter-spacing: -.34px; }
.f-col h2 { margin-top: 37px; font-size: 18.3px; line-height: 25px; font-weight: 700; letter-spacing: -.27px; }
.f-actions { display: flex; justify-content: flex-end; gap: 10px; margin: 26px -1px 0 0; font-size: 18.3px; font-weight: 600; line-height: 41px; text-align: center; letter-spacing: -.37px; }
.f-actions span { width: 151px; height: 40px; border-radius: 5px; background: #2b2a33; }
.f-actions .primary { width: 226px; background: #00ddff; color: #2b2a33; }
```
